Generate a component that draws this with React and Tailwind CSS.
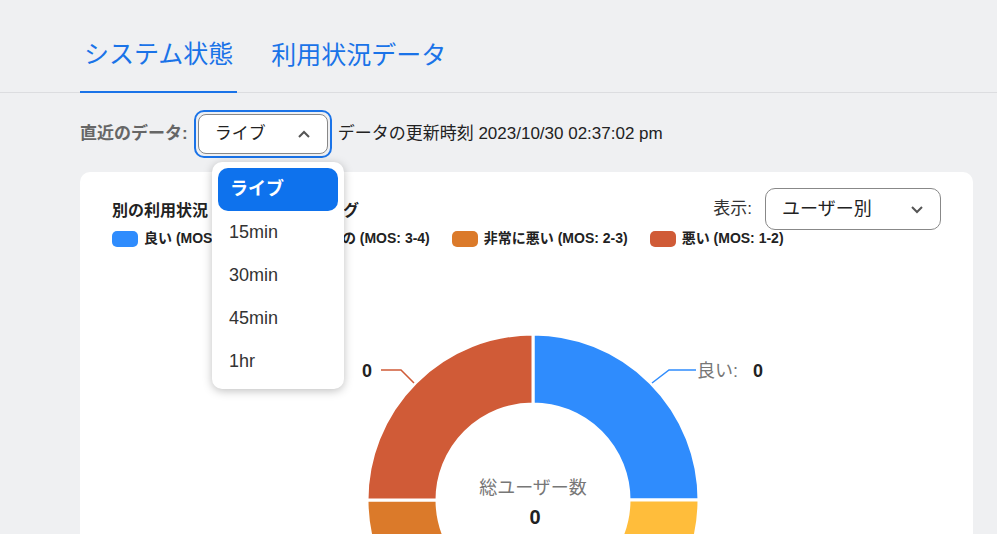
import React from "react";

const F = { fontFamily: '"Liberation Sans", "Noto Sans CJK JP", sans-serif' };

function arc(cx, cy, r1, r2, a0, a1) {
  const p = (r, a) => [cx + r * Math.sin(a), cy - r * Math.cos(a)];
  const [x1, y1] = p(r2, a0), [x2, y2] = p(r2, a1), [x3, y3] = p(r1, a1), [x4, y4] = p(r1, a0);
  return `M${x1} ${y1} A${r2} ${r2} 0 0 1 ${x2} ${y2} L${x3} ${y3} A${r1} ${r1} 0 0 0 ${x4} ${y4}Z`;
}

function Donut() {
  const q = Math.PI / 2;
  const segs = [
    ["#2f8cfd", 0],
    ["#ffbd3b", q],
    ["#db7a2a", 2 * q],
    ["#d05b37", 3 * q],
  ];
  return (
    <svg width="893" height="300" className="block">
      {segs.map(([c, a]) => (
        <path key={c} d={arc(453, 237, 96, 166, a, a + q)} fill={c} stroke="#fff" strokeWidth="3" />
      ))}
      <polyline points="572,120 589,107 616,107" fill="none" stroke="#2f8cfd" strokeWidth="1.5" />
      <polyline points="334,120 321,107 301,107" fill="none" stroke="#d05b37" strokeWidth="1.5" />
      <text x="617" y="114" fontSize="18" fill="#777" style={F}>良い:</text>
      <text x="673" y="114" fontSize="18" fontWeight="700" fill="#222" style={F}>0</text>
      <text x="218" y="114" fontSize="18" fill="#777" style={F}>悪い:</text>
      <text x="282" y="114" fontSize="18" fontWeight="700" fill="#222" style={F}>0</text>
      <text x="453" y="231" fontSize="18" fill="#777" textAnchor="middle" style={F}>総ユーザー数</text>
      <text x="455" y="261" fontSize="20" fontWeight="700" fill="#222" textAnchor="middle" style={F}>0</text>
    </svg>
  );
}

const Swatch = ({ c }) => <span className={`inline-block w-[26px] h-[16px] rounded-[5px] mr-[6px] ${c}`} />;

export default function App() {
  return (
    <div className="w-[997px] h-[534px] overflow-hidden bg-[#eff0f2] relative" style={F}>
      <div className="flex pl-[80px] border-b border-[#dcdde0] h-[93px] items-end">
        <div className="text-[25px] text-[#1a73e8] px-[4px] pb-[18px] border-b-2 border-[#1a73e8] -mb-px">システム状態</div>
        <div className="text-[25px] text-[#1a73e8] ml-[34px] pb-[18px]">利用状況データ</div>
      </div>
      <div className="flex items-center pl-[80px] mt-[15px] h-[52px]">
        <span className="text-[17px] font-bold text-[#666]">直近のデータ:</span>
        <div className="ml-[6px] rounded-[10px] border-2 border-[#1a73e8] p-[2px]">
          <div className="w-[130px] h-[40px] rounded-[8px] border border-[#888] bg-white flex items-center justify-between px-[16px]">
            <span className="text-[17px] text-[#222]">ライブ</span>
            <svg width="14" height="10" viewBox="0 0 14 10"><path d="M2 8l5-5 5 5" fill="none" stroke="#555" strokeWidth="2" /></svg>
          </div>
        </div>
        <span className="ml-[6px] text-[17px] text-[#222]">データの更新時刻 2023/10/30 02:37:02 pm</span>
      </div>
      <div className="ml-[80px] mr-[24px] mt-[12px] bg-white rounded-[10px] h-[400px] pt-[16px] px-[32px]">
        <div className="flex items-center justify-between">
          <div className="text-[16px] font-bold text-[#222] pt-[4px]">別の利用状況 (MOS) ミーティング</div>
          <div className="flex items-center">
            <span className="text-[17px] text-[#333] mr-[13px]">表示:</span>
            <div className="w-[176px] h-[42px] border border-[#888] rounded-[10px] flex items-center justify-between px-[16px]">
              <span className="text-[18px] text-[#222]">ユーザー別</span>
              <svg width="14" height="10" viewBox="0 0 14 10"><path d="M2 3l5 5 5-5" fill="none" stroke="#555" strokeWidth="2" /></svg>
            </div>
          </div>
        </div>
        <div className="flex items-center text-[14px] font-bold text-[#222] -mt-[2px]">
          <Swatch c="bg-[#2f8cfd]" />良い (MOS: 4-5)
          <span className="ml-[22px] flex items-center"><Swatch c="bg-[#ffbd3b]" />人並みの (MOS: 3-4)</span>
          <span className="ml-[22px] flex items-center"><Swatch c="bg-[#db7a2a]" />非常に悪い (MOS: 2-3)</span>
          <span className="ml-[22px] flex items-center"><Swatch c="bg-[#d05b37]" />悪い (MOS: 1-2)</span>
        </div>
        <div className="-mx-[32px] mt-[14px]"><Donut /></div>
      </div>
      <div className="absolute left-[212px] top-[162px] w-[132px] bg-white rounded-[10px] shadow-[0_2px_10px_rgba(0,0,0,0.25)] p-[6px] flex flex-col">
        <div className="h-[43px] rounded-[10px] bg-[#0e72ed] text-white font-bold text-[18px] flex items-center px-[12px]">ライブ</div>
        {["15min", "30min", "45min", "1hr"].map((t) => (
          <div key={t} className="h-[43px] text-[18px] text-[#333] flex items-center px-[11px]">{t}</div>
        ))}
      </div>
    </div>
  );
}
